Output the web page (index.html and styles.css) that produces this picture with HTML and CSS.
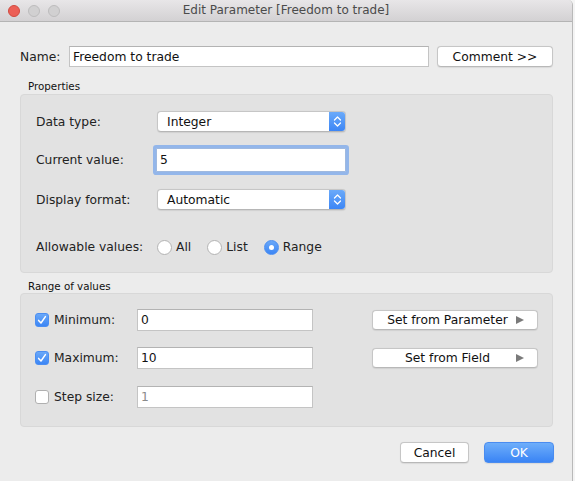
FILE: index.html
```html
<!DOCTYPE html>
<html>
<head>
<meta charset="utf-8">
<title>Edit Parameter</title>
<link rel="stylesheet" href="styles.css">
</head>
<body>
<div class="window">
  <div class="titlebar">
    <div class="lights">
      <span class="light close"></span>
      <span class="light"></span>
      <span class="light"></span>
    </div>
    <div class="title">Edit Parameter [Freedom to trade]</div>
    <div></div>
  </div>
  <div class="content">
    <div class="name-row">
      <span class="name-label">Name:</span>
      <div class="field name-field">Freedom to trade</div>
      <div class="btn comment-btn">Comment &gt;&gt;</div>
    </div>

    <div class="group-label first">Properties</div>
    <div class="panel props">
      <div class="prow row-type">
        <span class="plabel">Data type:</span>
        <div class="select">
          <span class="select-text">Integer</span>
          <span class="stepper"><svg width="17" height="21" viewBox="0 0 17 21"><path d="M5.5 9 L8.5 6 L11.5 9 M5.5 12 L8.5 15 L11.5 12" fill="none" stroke="#fff" stroke-width="1.3" stroke-linecap="round" stroke-linejoin="round"/></svg></span>
        </div>
      </div>
      <div class="prow row-current">
        <span class="plabel">Current value:</span>
        <div class="field focus-field">5</div>
      </div>
      <div class="prow row-format">
        <span class="plabel">Display format:</span>
        <div class="select">
          <span class="select-text">Automatic</span>
          <span class="stepper"><svg width="17" height="21" viewBox="0 0 17 21"><path d="M5.5 9 L8.5 6 L11.5 9 M5.5 12 L8.5 15 L11.5 12" fill="none" stroke="#fff" stroke-width="1.3" stroke-linecap="round" stroke-linejoin="round"/></svg></span>
        </div>
      </div>
      <div class="prow row-allow">
        <span class="plabel">Allowable values:</span>
        <div class="radios">
          <span class="radio-item"><span class="radio"></span>All</span>
          <span class="radio-item"><span class="radio"></span>List</span>
          <span class="radio-item"><span class="radio on"></span>Range</span>
        </div>
      </div>
    </div>

    <div class="group-label second">Range of values</div>
    <div class="panel range">
      <div class="rrow">
        <span class="check-label"><span class="check on"><svg width="14" height="14" viewBox="0 0 14 14"><path d="M3.6 7.4 L6 10 L10.4 3.6" fill="none" stroke="#fff" stroke-width="1.5" stroke-linecap="round" stroke-linejoin="round"/></svg></span>Minimum:</span>
        <div class="field range-field">0</div>
        <div class="btn set-btn"><span class="set-text">Set from Parameter</span><span class="tri"></span></div>
      </div>
      <div class="rrow">
        <span class="check-label"><span class="check on"><svg width="14" height="14" viewBox="0 0 14 14"><path d="M3.6 7.4 L6 10 L10.4 3.6" fill="none" stroke="#fff" stroke-width="1.5" stroke-linecap="round" stroke-linejoin="round"/></svg></span>Maximum:</span>
        <div class="field range-field">10</div>
        <div class="btn set-btn"><span class="set-text">Set from Field</span><span class="tri"></span></div>
      </div>
      <div class="rrow step-row">
        <span class="check-label"><span class="check"></span>Step size:</span>
        <div class="field range-field disabled">1</div>
      </div>
    </div>

    <div class="footer">
      <div class="btn cancel-btn">Cancel</div>
      <div class="btn ok-btn">OK</div>
    </div>
  </div>
</div>
</body>
</html>
```

FILE: styles.css
```css
html, body {
  margin: 0;
  padding: 0;
}

body {
  background: #f4f4f4;
  font-family: "DejaVu Sans", "Noto Sans", sans-serif;
  font-size: 12.3px;
  color: #222;
  width: 575px;
  height: 481px;
  overflow: hidden;
}

.window {
  width: 572px;
  height: 481px;
  background: #ececec;
  border-right: 1px solid #b9b9b9;
  border-top-right-radius: 5px;
  overflow: hidden;
}

.titlebar {
  height: 21px;
  border-bottom: 1px solid #b4b4b4;
  background: linear-gradient(#e8e6e8, #d3d1d3);
  display: grid;
  grid-template-columns: 1fr auto 1fr;
  align-items: center;
}

.lights {
  display: flex;
  gap: 8px;
  padding-left: 8px;
}

.light {
  width: 10px;
  height: 10px;
  border-radius: 50%;
  background: #d1d0d1;
  border: 1px solid #bdbcbd;
}

.light.close {
  background: #ec5f56;
  border-color: #d14a40;
}

.title {
  font-size: 12px;
  color: #4b4b4b;
  line-height: 21px;
}

.content {
  padding: 24px 19px 0 20px;
}

.name-row {
  display: flex;
  align-items: center;
  height: 21px;
}

.name-label {
  width: 49px;
  flex: none;
}

.field {
  box-sizing: border-box;
  background: #fff;
  border: 1px solid #c4c4c4;
  border-top-color: #b3b3b3;
  padding-left: 3px;
  display: flex;
  align-items: center;
  color: #111;
}

.name-field {
  flex: 1;
  height: 21px;
}

.btn {
  box-sizing: border-box;
  background: #fff;
  border: 1px solid #c6c6c6;
  border-bottom-color: #b8b8b8;
  border-radius: 4px;
  box-shadow: 0 0.5px 1px rgba(0,0,0,0.08);
  display: flex;
  align-items: center;
  justify-content: center;
  color: #111;
}

.comment-btn {
  width: 116px;
  height: 21px;
  margin-left: 8px;
}

.group-label {
  font-size: 10.3px;
  line-height: 13px;
  padding-left: 8px;
  color: #111;
}

.group-label.first {
  margin-top: 13px;
  height: 14px;
}

.group-label.second {
  margin-top: 7px;
}

.panel {
  box-sizing: border-box;
  background: #e2e2e2;
  border: 1px solid #d8d8d8;
  border-radius: 4px;
}

.props {
  height: 179px;
  padding: 16px 0 0 15px;
  display: flex;
  flex-direction: column;
}

.prow {
  display: flex;
  align-items: center;
}

.plabel {
  width: 121px;
  flex: none;
}

.row-type {
  height: 21px;
}

.row-current {
  height: 24px;
  margin-top: 16px;
}

.row-format {
  height: 21px;
  margin-top: 17px;
}

.row-allow {
  height: 16px;
  margin-top: 29px;
}

.select {
  box-sizing: border-box;
  width: 189px;
  height: 21px;
  background: #fff;
  border: 1px solid #c6c6c6;
  border-bottom-color: #b6b6b6;
  border-radius: 4px;
  box-shadow: 0 0.5px 1px rgba(0,0,0,0.08);
  display: flex;
  align-items: center;
  overflow: hidden;
}

.select-text {
  flex: 1;
  padding-left: 9px;
  color: #111;
}

.stepper {
  width: 17px;
  height: 21px;
  flex: none;
  margin-right: -1px;
  background: linear-gradient(#6dacfa, #3a84f5);
  display: flex;
}

.focus-field {
  width: 190px;
  height: 24px;
  margin-left: -1px;
  border-color: #9fb9df;
  box-shadow: 0 0 0 3px #93b6ea;
  border-radius: 1px;
}

.radios {
  display: flex;
  gap: 16px;
}

.radio-item {
  display: flex;
  align-items: center;
  gap: 4px;
}

.radio {
  box-sizing: border-box;
  width: 15px;
  height: 15px;
  border-radius: 50%;
  background: #fff;
  border: 1px solid #b3b3b3;
  display: flex;
  align-items: center;
  justify-content: center;
}

.radio.on {
  background: linear-gradient(#6aa8f8, #3c86f5);
  border-color: #4b8ef2;
}

.radio.on::after {
  content: "";
  width: 5px;
  height: 5px;
  border-radius: 50%;
  background: #fff;
}

.range {
  height: 134px;
  padding: 15px 14px 0 14px;
  display: flex;
  flex-direction: column;
  gap: 16px;
}

.rrow {
  display: grid;
  grid-template-columns: 102px 176px 1fr;
  align-items: center;
  height: 22px;
}

.step-row {
  margin-top: 1px;
}

.check-label {
  display: flex;
  align-items: center;
  gap: 5px;
}

.check {
  box-sizing: border-box;
  width: 14px;
  height: 14px;
  border-radius: 3px;
  background: #fff;
  border: 1px solid #b0b0b0;
  display: flex;
}

.check.on {
  background: linear-gradient(#6aa8f8, #3c86f5);
  border-color: #4b8ef2;
}

.check.on svg {
  margin: -1px;
}

.range-field {
  height: 22px;
}

.range-field.disabled {
  color: #8a8a8a;
}

.set-btn {
  justify-self: end;
  width: 166px;
  height: 20px;
  justify-content: flex-start;
}

.set-text {
  flex: 1;
  text-align: center;
  padding-left: 8px;
}

.tri {
  width: 0;
  height: 0;
  border-top: 4.5px solid transparent;
  border-bottom: 4.5px solid transparent;
  border-left: 8px solid #7a7a7a;
  margin-right: 13px;
  margin-left: 2px;
}

.footer {
  display: flex;
  justify-content: flex-end;
  gap: 15px;
  margin-top: 15px;
}

.cancel-btn {
  width: 69px;
  height: 21px;
}

.ok-btn {
  width: 70px;
  height: 21px;
  margin-right: -1px;
  background: linear-gradient(#6eaefa, #3a84f5);
  border-color: #4a8cf0;
  color: #fff;
}
```
